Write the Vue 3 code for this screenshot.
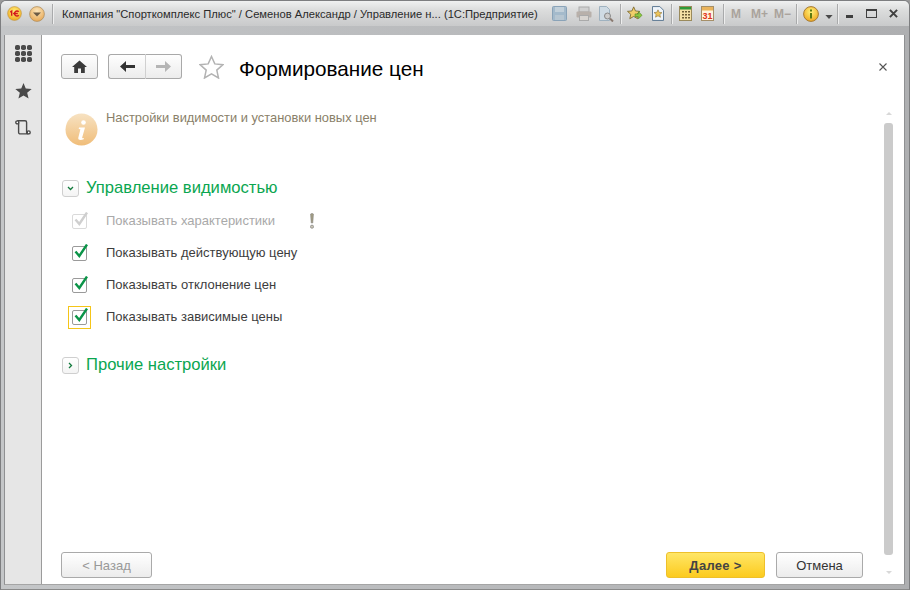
<template>
  <div class="window">
    <header class="titlebar">
      <div class="tb-left">
        <svg class="logo" width="15" height="15" viewBox="0 0 16 16">
          <defs>
            <radialGradient id="lg" cx="50%" cy="35%" r="65%"><stop offset="0" stop-color="#fff27a"/><stop offset="1" stop-color="#f0a820"/></radialGradient>
            <radialGradient id="og" cx="50%" cy="30%" r="70%"><stop offset="0" stop-color="#fbe5ba"/><stop offset="1" stop-color="#e8a956"/></radialGradient>
          </defs>
          <circle cx="8" cy="8" r="7.4" fill="url(#lg)" stroke="#b9924a" stroke-width=".6"/>
          <path d="M3.500 6.500 5 5.500V10.500M12.500 6.200A2.600 2.600 0 1 0 12.500 9.800M6.500 8H11.500" fill="none" stroke="#d4181c" stroke-width="1.500"/>
        </svg>
        <svg class="menu-btn" width="16" height="16" viewBox="0 0 16 16">
          <circle cx="8" cy="8" r="7.400" fill="url(#og)" stroke="#a98a5c" stroke-width=".7"/>
          <path d="M4 6.500h8L8 10.500z" fill="#6c5b45"/>
        </svg>
        <span class="sep sl"></span>
        <span class="title">Компания "Спорткомплекс Плюс" / Семенов Александр / Управление н... (1С:Предприятие)</span>
      </div>
      <div class="tb-right">
        <svg width="15" height="15" viewBox="0 0 15 15"><rect x=".5" y=".5" width="14" height="14" rx="1" fill="#a4bacb" stroke="#8aa3b8"/><rect x="3" y="1" width="9" height="5" fill="#c2d0da"/><rect x="3" y="9" width="9" height="5" fill="#b7c6d1"/></svg>
        <svg class="i-print" width="16" height="15" viewBox="0 0 16 15"><rect x="3" y="1" width="10" height="5" fill="#d0d0d0" stroke="#aaa"/><rect x=".5" y="5.500" width="15" height="6" rx="1" fill="#b8b0aa"/><rect x="3.500" y="9.500" width="9" height="5" fill="#d8d4d0" stroke="#aaa"/></svg>
        <svg class="i-prev" width="16" height="16" viewBox="0 0 16 16"><path d="M1.500.5h7l3 3v11h-10z" fill="#cfdbe4" stroke="#9fb2c0"/><circle cx="9.500" cy="10" r="3" fill="#ccc" stroke="#888"/><path d="M12 12.500l3 3" stroke="#8a7a70" stroke-width="2"/></svg>
        <span class="sep s1"></span>
        <svg width="16" height="15" viewBox="0 0 18 17"><path d="M7.500 1l2 4.600 5 .5-3.700 3.300 1.100 5-4.400-2.600-4.400 2.600 1.100-5L.5 6.100l5-.5z" fill="#f1ce6a" stroke="#7d6a30"/><path d="M9 9h4V6.500l4 4-4 4V12H9z" fill="#8ec63f" stroke="#4d8b22" stroke-width=".7"/></svg>
        <svg class="i-doc" width="12" height="15" viewBox="0 0 13 16"><path d="M.5.5h8l4 4v11H.5z" fill="#eef4fa" stroke="#52708c"/><path d="M6.500 4l1.300 2.800 3 .3-2.300 2 .7 3-2.700-1.600L3.800 12l.7-3-2.300-2 3-.3z" fill="#eec55a" stroke="#86692a" stroke-width=".6"/></svg>
        <span class="sep s2"></span>
        <svg class="i-calc" width="13" height="15" viewBox="0 0 13 15"><rect x=".5" y=".5" width="12" height="14" fill="#f4dfa5" stroke="#9a8a5c"/><rect x="1" y="1" width="11" height="2.500" fill="#2d9a38"/><path d="M3 5h2v1.500H3zM6 5h2v1.500H6zM9 5h2v1.500H9zM3 8h2v1.500H3zM6 8h2v1.500H6zM9 8h2v1.500H9zM3 11h2v1.500H3zM6 11h2v1.500H6zM9 11h2v1.500H9z" fill="#6d5c36"/></svg>
        <svg class="i-cal" width="13" height="15" viewBox="0 0 13 15"><rect x=".5" y=".5" width="12" height="14" fill="#fff4df" stroke="#a58f68"/><rect x="1" y="1" width="11" height="3.500" fill="#eab45c"/><text x="6.500" y="13.300" class="cal">31</text></svg>
        <span class="sep s3"></span>
        <span class="m m0">M</span><span class="m m1">M+</span><span class="m m2">M−</span>
        <span class="sep s4"></span>
        <svg width="16" height="16" viewBox="0 0 16 16"><circle cx="8" cy="8" r="7.400" fill="url(#lg)" stroke="#a57b35"/><rect x="7" y="7" width="2" height="5.500" fill="#5c7a12"/><rect x="7" y="3.500" width="2" height="2" fill="#5c7a12"/></svg>
        <svg class="caret" width="8" height="4" viewBox="0 0 9 5"><path d="M0 0h9L4.500 5z" fill="#4a4a4a"/></svg>
        <span class="sep s5"></span>
        <span class="wc min"></span>
        <span class="wc max"></span>
        <svg class="wclose" width="9" height="9" viewBox="0 0 10 10"><path d="M1 1l8 8M9 1l-8 8" stroke="#3f3f3f" stroke-width="2.200"/></svg>
      </div>
    </header>
    <div class="band"></div>
    <div class="frame">
      <aside class="sidebar">
        <svg width="17" height="17" viewBox="0 0 17 17" fill="#4a4a4a">
          <rect v-for="p in dots" :key="p[0] + '-' + p[1]" :x="p[0]" :y="p[1]" width="5" height="5" rx="1.800"/>
        </svg>
        <svg width="17" height="16" viewBox="0 0 18 17"><path d="M9 0l2.400 5.800 6.300.5-4.800 4.100 1.500 6.200L9 13.300 3.600 16.600l1.500-6.200L.3 6.300l6.300-.5z" fill="#4a4a4a"/></svg>
        <svg width="16" height="15" viewBox="0 0 16 15" fill="none" stroke="#4a4a4a" stroke-width="1.400"><path d="M2.200.8H10c1 0 1.600.7 1.600 1.600V12c0 1 .7 1.900 1.900 1.900H5.300c-1 0-1.700-.7-1.700-1.700V2.500"/><circle cx="2.300" cy="2.400" r="1.500" fill="#fff"/><circle cx="13.700" cy="12.400" r="1.500" fill="#fff"/></svg>
      </aside>
      <main class="panel">
        <div class="head">
          <button class="tool home" type="button">
            <svg width="15" height="13" viewBox="0 0 15 13"><path d="M7.500 .5L15 7h-2.200v6H9V8.500H6V13H2.200V7H0z" fill="#3a3a3a"/></svg>
          </button>
          <div class="nav">
            <button class="tool back" type="button">
              <svg width="15" height="11" viewBox="0 0 15 11"><path d="M0 5.500L6 0v4h9v3H6v4z" fill="#333"/></svg>
            </button>
            <button class="tool fwd" type="button">
              <svg width="15" height="11" viewBox="0 0 15 11"><path d="M15 5.500L9 0v4H0v3h9v4z" fill="#b5b5b5"/></svg>
            </button>
          </div>
          <svg class="fav" width="25" height="24" viewBox="0 0 25 24"><path d="M12.500 1.500l3.300 7.400 8 .8-6 5.400 1.700 7.900-7-4.100-7 4.100 1.700-7.900-6-5.400 8-.8z" fill="#fff" stroke="#b3b3b3" stroke-width="1.500"/></svg>
          <h1>Формирование цен</h1>
          <svg class="close" width="8" height="8" viewBox="0 0 8 8"><path d="M.5.5l7 7M7.500.5l-7 7" stroke="#555" stroke-width="1.100"/></svg>
        </div>
        <div class="content">
          <div class="form">
            <div class="info">
              <svg width="33" height="33" viewBox="0 0 33 33">
                <defs><linearGradient id="ig" x1="0" y1="0" x2="0" y2="1"><stop offset="0" stop-color="#f7e2c2"/><stop offset="1" stop-color="#f0bd79"/></linearGradient></defs>
                <circle cx="16.500" cy="16.500" r="16" fill="url(#ig)"/>
                <circle cx="18.500" cy="9.500" r="2.300" fill="#fff"/>
                <path d="M14 14.500h6l-2.800 10c-.2.800.5 1 1.800.4l-.3 1.300c-2.500 1.200-6 1.200-5.400-1.400l2.100-8.500-1.700-.4z" fill="#fff"/>
              </svg>
              <p>Настройки видимости и установки новых цен</p>
            </div>
            <section class="group">
              <div class="gh">
                <span class="toggle"><svg width="7" height="5" viewBox="0 0 7 5"><path d="M1 1l2.500 2.500L6 1" fill="none" stroke="#127a3c" stroke-width="1.300"/></svg></span>
                <h2>Управление видимостью</h2>
              </div>
              <div class="rows">
                <div v-for="r in rows" :key="r.label" class="row" :class="{ off: r.off }">
                  <span class="boxwrap" :class="{ focus: r.focus }">
                    <span class="box">
                      <svg width="14" height="14" viewBox="0 0 14 14"><path d="M1.500 7.500l3.800 4.500L13 .5" fill="none" :stroke="r.off ? '#cfcfcf' : '#0b9448'" stroke-width="2.400"/></svg>
                    </span>
                  </span>
                  <span class="lbl">{{ r.label }}</span>
                  <svg v-if="r.off" class="excl" width="4" height="16" viewBox="0 0 4 16"><path d="M.5 1.200c0-1 3-1 3 0L2.800 10H1.200z" fill="#a09a82" stroke="#8a8a8a" stroke-width=".5"/><circle cx="2" cy="13.700" r="1.600" fill="#c9c5b5" stroke="#777" stroke-width=".6"/></svg>
                </div>
              </div>
            </section>
            <section class="group second">
              <div class="gh">
                <span class="toggle"><svg width="5" height="7" viewBox="0 0 5 7"><path d="M1 1l2.500 2.500L1 6" fill="none" stroke="#127a3c" stroke-width="1.300"/></svg></span>
                <h2>Прочие настройки</h2>
              </div>
            </section>
            <footer class="foot">
              <button class="btn prev" type="button">&lt; Назад</button>
              <button class="btn next" type="button">Далее &gt;</button>
              <button class="btn cancel" type="button">Отмена</button>
            </footer>
          </div>
          <div class="scroll">
            <i class="arrow up"></i>
            <div class="thumb"></div>
            <i class="arrow down"></i>
          </div>
        </div>
      </main>
    </div>
  </div>
</template>

<script setup>
const dots = []
for (const y of [0, 6, 12]) for (const x of [0, 6, 12]) dots.push([x, y])
const rows = [
  { label: 'Показывать характеристики', off: true },
  { label: 'Показывать действующую цену' },
  { label: 'Показывать отклонение цен' },
  { label: 'Показывать зависимые цены', focus: true },
]
</script>

<style>
html, body { margin: 0; background: #9a9a9a; }
</style>

<style scoped>
.window {
  width: 910px; height: 590px; box-sizing: border-box; display: flex; flex-direction: column;
  font-family: "Liberation Sans", Arial, sans-serif; font-size: 13px; color: #333;
  background: linear-gradient(90deg, #c4c6c8, #aeafb1); border-radius: 6px 6px 0 0;
  border: 1px solid #7d7e80; border-bottom-color: #8a8a8a; overflow: hidden;
}
.titlebar {
  height: 25px; flex: none; display: flex; justify-content: space-between; align-items: center; padding: 0 0 0 6px;
  background: linear-gradient(180deg, #f0f1f1 0, #dcdddd 35%, #c9cacb 100%);
}
.tb-left, .tb-right { display: flex; align-items: center; flex: none; }
.tb-right svg { flex: none; }
.menu-btn { margin-left: 7px; }
.sep { width: 1px; height: 20px; background: #a9aaab; box-shadow: 1px 0 0 #eee; flex: none; }
.sl { margin-left: 7px; }
.title { margin-left: 9px; font-size: 11.2px; color: #2a2a2a; white-space: nowrap; }
.tb-right { padding-right: 11px; }
.i-print { margin-left: 9px; }
.i-prev { margin-left: 6px; }
.s1 { margin: 0 6px 0 6px; }
.i-doc { margin-left: 9px; }
.s2 { margin: 0 7px 0 7px; }
.i-cal { margin-left: 9px; }
.s3 { margin: 0 7px 0 9px; }
.m { font-size: 12px; font-weight: 700; color: #aaa39c; display: block; }
.m0 { width: 10px; }
.m1 { width: 17px; margin-left: 10px; }
.m2 { width: 17px; margin-left: 6px; }
.s4 { margin: 0 6px 0 5px; }
.caret { margin: 6px 0 0 6px; }
.s5 { margin: 0 8px 0 4px; }
.wc { display: block; box-sizing: border-box; flex: none; }
.min { width: 7px; height: 3px; background: #3f3f3f; margin-top: 6px; }
.max { width: 11px; height: 9px; border: 1px solid #3f3f3f; border-top-width: 2px; margin-left: 13px; }
.wclose { margin-left: 12px; }
.cal { font: 700 9px "Liberation Sans", sans-serif; fill: #e0341c; text-anchor: middle; }
.band { height: 9px; flex: none; }
.frame { flex: 1; min-height: 0; display: flex; margin: 0 4px 4px 3px; border: 1px solid #8f9092; border-bottom-color: #a5a5a5; border-top: 0; }
.sidebar {
  width: 36px; flex: none; box-sizing: content-box; background: #e6e6e6; border-right: 1px solid #9b9b9b; display: flex; flex-direction: column; align-items: center;
  padding-top: 10px; gap: 21px;
}
.panel { flex: 1; min-width: 0; background: #fff; display: flex; flex-direction: column; }
.head { display: flex; align-items: center; padding: 19px 17px 0 19px; height: 25px; flex: none; }
.tool {
  height: 25px; box-sizing: border-box; display: flex; align-items: center; justify-content: center; padding: 0;
  background: linear-gradient(180deg, #fefefe, #ececec); border: 1px solid #a9a9a9; border-radius: 3px;
}
.home { width: 37px; }
.nav { display: flex; margin-left: 10px; }
.back { width: 38px; border-radius: 3px 0 0 3px; border-right: 1px solid #d0d0d0; }
.fwd { width: 36px; border-radius: 0 3px 3px 0; border-left: 0; }
.fav { margin-left: 17px; }
h1 { margin: 3px 0 0 15px; font-size: 20.7px; font-weight: 400; color: #000; flex: 1; line-height: 25px; }
.content { flex: 1; min-height: 0; display: flex; }
.form { flex: 1; min-width: 0; display: flex; flex-direction: column; padding: 34px 21px 6px 19px; }
.info { display: flex; padding-left: 4px; height: 33px; }
.info p { margin: -3px 0 0 8px; color: #8a7f69; line-height: 15px; font-size: 12.9px; }
.group { margin-top: 32px; }
.second { margin-top: 22px; }
.gh { display: flex; align-items: center; height: 20px; padding-left: 1px; }
.toggle { width: 17px; height: 17px; box-sizing: border-box; border: 1px solid #cfcfcf; border-radius: 3px; display: flex; align-items: center; justify-content: center; background: linear-gradient(#fff, #f4f4f4); }
h2 { margin: 0 0 0 7px; font-size: 16.6px; font-weight: 400; color: #0aa650; line-height: 20px; }
.rows { padding-top: 7px; }
.row { height: 32px; display: flex; align-items: center; padding-left: 7px; color: #3d3d3d; }
.row.off { color: #a9a9a9; }
.boxwrap { width: 23px; height: 23px; box-sizing: border-box; border: 1px solid transparent; display: flex; align-items: center; justify-content: center; }
.boxwrap.focus { border-color: #f5c518; }
.box { width: 15px; height: 15px; box-sizing: border-box; border: 1px solid #9a9a9a; border-radius: 2px; position: relative; background: #fff; display: block; }
.off .box { border-color: #dadada; }
.box svg { position: absolute; left: 1px; top: -3px; }
.lbl { margin: 0 0 2px 15px; }
.excl { margin-left: 35px; }
.foot { margin-top: auto; display: flex; height: 26px; }
.btn { height: 26px; box-sizing: border-box; font: 13px "Liberation Sans", sans-serif; border-radius: 3px; padding: 0; border: 1px solid #aaa; background: linear-gradient(#fff, #ececec); color: #333; }
.prev { width: 91px; color: #999; }
.next { width: 99px; margin-left: auto; background: linear-gradient(#ffe666, #fccb1f); border-color: #eec02a; font-weight: 700; color: #444; letter-spacing: .3px; }
.cancel { width: 87px; margin-left: 11px; }
.scroll { width: 9px; flex: none; margin-right: 11px; margin-top: 33px; height: 464px; display: flex; flex-direction: column; align-items: center; }
.arrow { width: 0; height: 0; border-left: 3px solid transparent; border-right: 3px solid transparent; display: block; flex: none; }
.up { border-bottom: 3px solid #d8d8d8; }
.down { border-top: 3px solid #d8d8d8; margin-top: 16px; }
.thumb { width: 9px; height: 432px; background: #cbcbcb; border-radius: 3px; margin-top: 8px; flex: none; }
</style>
